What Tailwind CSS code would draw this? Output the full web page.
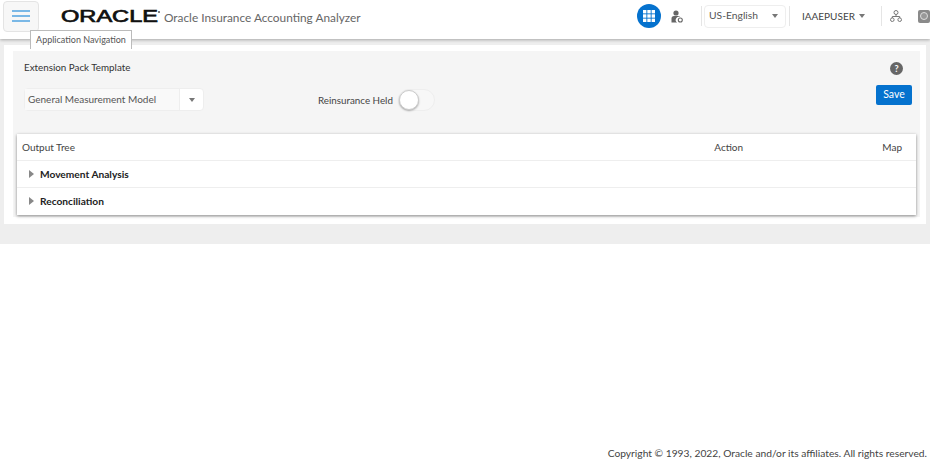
<!DOCTYPE html>
<html lang="en">
<head>
  <meta charset="UTF-8">
  <title>Oracle Insurance Accounting Analyzer</title>
  <script src="https://cdn.jsdelivr.net/npm/@tailwindcss/browser@4"></script>
</head>
<body class="h-[459px] w-[930px] overflow-hidden bg-white font-['Lato',sans-serif] text-[#333]">
  <!-- header -->
  <header class="relative z-10 flex h-[39px] items-center bg-white pb-[7px] pl-[3px] shadow-[0_1px_3px_rgba(0,0,0,0.3)]">
    <button class="flex h-[31px] w-[36px] shrink-0 flex-col items-center justify-center gap-[3px] rounded-sm border border-[#e4e4e4] bg-[#f7f7f7]">
      <span class="h-[2px] w-[18px] bg-[#7ab8e6]"></span>
      <span class="h-[2px] w-[18px] bg-[#7ab8e6]"></span>
      <span class="h-[2px] w-[18px] bg-[#7ab8e6]"></span>
    </button>
    <svg class="ml-[22px] shrink-0" width="100" height="18" viewBox="0 0 100 18">
      <text x="0" y="15" textLength="97" lengthAdjust="spacingAndGlyphs" font-family="Liberation Sans" font-size="17" fill="#111" stroke="#111" stroke-width="0.7">ORACLE</text>
      <circle cx="98" cy="5" r="1" fill="#555"/>
    </svg>
    <span class="ml-[3px] mt-[3px] text-[11.85px] text-[#666]">Oracle Insurance Accounting Analyzer</span>

    <div class="ml-auto flex items-center">
      <div class="flex h-[24px] w-[24px] items-center justify-center rounded-full bg-[#0572ce]">
        <svg width="12" height="12" viewBox="0 0 12 12" fill="#fff">
          <rect x="0" y="0" width="3.4" height="3.4"/><rect x="4.3" y="0" width="3.4" height="3.4"/><rect x="8.6" y="0" width="3.4" height="3.4"/>
          <rect x="0" y="4.3" width="3.4" height="3.4"/><rect x="4.3" y="4.3" width="3.4" height="3.4"/><rect x="8.6" y="4.3" width="3.4" height="3.4"/>
          <rect x="0" y="8.6" width="3.4" height="3.4"/><rect x="4.3" y="8.6" width="3.4" height="3.4"/><rect x="8.6" y="8.6" width="3.4" height="3.4"/>
        </svg>
      </div>
      <svg class="ml-[10px]" width="12" height="13" viewBox="0 0 12 13" fill="#666">
        <circle cx="5" cy="3" r="2.6"/>
        <path d="M0.5 12.5V8.5Q0.5 6 3 6H7Q8.6 6 9 7.2A3 3 0 0 0 6.2 12.5Z"/>
        <circle cx="9.3" cy="10" r="2" fill="none" stroke="#666" stroke-width="1.1"/>
      </svg>
      <span class="ml-[18px] h-[20px] w-px bg-[#e5e5e5]"></span>
      <div class="ml-[2px] flex h-[23px] w-[82px] items-center justify-between rounded-sm border border-[#eee] pl-[4px] pr-[7px] text-[10.3px] text-[#555]">
        US-English
        <span class="h-0 w-0 border-x-[3px] border-t-[4px] border-x-transparent border-t-[#777]"></span>
      </div>
      <span class="ml-[3px] h-[20px] w-px bg-[#e5e5e5]"></span>
      <span class="ml-[12px] w-[51px] whitespace-nowrap text-[10px] text-[#444]">IAAEPUSER</span>
      <span class="ml-[6px] h-0 w-0 border-x-[3px] border-t-[4px] border-x-transparent border-t-[#777]"></span>
      <span class="ml-[16px] h-[20px] w-px bg-[#e5e5e5]"></span>
      <svg class="ml-[8px]" width="12" height="12" viewBox="0 0 12 12" fill="none" stroke="#777" stroke-width="1">
        <circle cx="6" cy="2.5" r="2"/><circle cx="2.3" cy="9.7" r="1.8"/><circle cx="9.7" cy="9.7" r="1.8"/>
        <path d="M6 4.5V6.5M2.3 8V6.5H9.7V8"/>
      </svg>
      <div class="ml-[16px] flex h-[13px] w-[12px] shrink-0 items-center justify-center rounded-[2px] bg-[#8a8a8a]">
        <span class="h-[8px] w-[8px] rounded-full border border-[#ddd] bg-[#999]"></span>
      </div>
    </div>
  </header>

  <!-- tooltip over the header edge -->
  <div class="absolute left-[30px] top-[30px] z-20 flex h-[19px] w-[102px] items-center justify-center border border-b-0 border-[#bbb] bg-white text-[9px] text-[#555]">Application Navigation</div>

  <main class="h-[205px] bg-[#eeeeee] pb-[20px] pl-[4px] pr-[4px] pt-[6px]">
    <section class="h-[179px] bg-white pb-[7px] pl-[9px] pr-[6px] pt-[6px]">
      <div class="flex h-full flex-col bg-[#f5f5f5] pl-[4px] pr-[4px]">
        <div class="flex h-[83px] shrink-0 flex-col">
          <div class="flex items-center justify-between pl-[7px] pr-[13px] pt-[9px]">
            <h1 class="text-[9.8px] leading-[15px] text-[#333]">Extension Pack Template</h1>
            <div class="mt-[2px] flex h-[13px] w-[13px] items-center justify-center rounded-full bg-[#666] text-[9px] font-bold leading-none text-white">?</div>
          </div>
          <div class="mt-[10px] flex items-start pl-[7px]">
            <div class="mt-[3px] flex h-[23px] w-[180px] rounded-sm border border-[#eee] bg-white text-[10px] text-[#555]">
              <span class="flex flex-1 items-center bg-[#f9f9f9] pl-[3px]">General Measurement Model</span>
              <span class="flex w-[24px] items-center justify-center border-l border-[#eee]">
                <span class="h-0 w-0 border-x-[3px] border-t-[4px] border-x-transparent border-t-[#777]"></span>
              </span>
            </div>
            <div class="ml-[114px] mt-[4px] flex items-center">
              <span class="w-[76px] whitespace-nowrap text-[9.8px] text-[#444]">Reinsurance Held</span>
              <span class="ml-[4px] flex h-[22px] w-[37px] items-center rounded-full border border-[#eeeeee] bg-[#f7f7f7]">
                <span class="h-[20px] w-[20px] rounded-full border border-[#ccc] bg-white shadow-[0_1px_2px_rgba(0,0,0,0.3)]"></span>
              </span>
            </div>
            <button class="ml-auto mr-[4px] h-[20px] w-[36px] rounded-[2px] bg-[#0572ce] text-[10.5px] text-white">Save</button>
          </div>
        </div>
        <div class="h-[81px] shrink-0 bg-white text-[10px] shadow-[0_1px_3px_rgba(0,0,0,0.45)]">
          <div class="flex h-[27px] items-center border-b border-[#eee] pt-[1px] text-[#444]">
            <span class="pl-[5px]">Output Tree</span>
            <span class="ml-auto w-[168px]">Action</span>
            <span class="mr-[14px]">Map</span>
          </div>
          <div class="flex h-[27px] items-center border-b border-[#eee] pl-[12px] pt-[1px] text-[10.2px] font-bold text-[#222]">
            <span class="mb-[2px] h-0 w-0 border-y-[4px] border-l-[5px] border-y-transparent border-l-[#888]"></span>
            <span class="ml-[6px]">Movement Analysis</span>
          </div>
          <div class="flex h-[27px] items-center pl-[12px] pt-[1px] text-[10.2px] font-bold text-[#222]">
            <span class="mb-[2px] h-0 w-0 border-y-[4px] border-l-[5px] border-y-transparent border-l-[#888]"></span>
            <span class="ml-[6px]">Reconciliation</span>
          </div>
        </div>
      </div>
    </section>
  </main>

  <footer class="mt-[201px] pr-[3px] text-right text-[10.25px] leading-[16px] text-[#444]">Copyright © 1993, 2022, Oracle and/or its affiliates. All rights reserved.</footer>
</body>
</html>
